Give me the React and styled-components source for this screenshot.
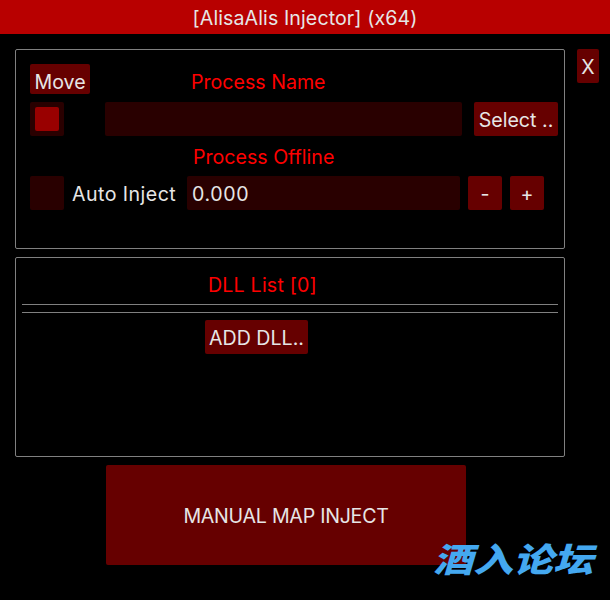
import React from "react";
import styled, { createGlobalStyle } from "styled-components";

const Global = createGlobalStyle`
  html, body {
    margin: 0;
    background: #000;
  }
  body {
    font-family: Inter, "Noto Sans", sans-serif;
    font-size: 19.6px;
    color: #e6e6e6;
  }
`;

const App = () => (
  <Page>
    <Global />
    <TitleBar>[AlisaAlis Injector] (x64)</TitleBar>
    <Body>
      <Column>
        <Panel $height={200}>
          <TopRow>
            <MoveButton>Move</MoveButton>
            <Label $left={101}>Process Name</Label>
          </TopRow>
          <Row>
            <CheckBox $checked />
            <Field $left={41} $width={357} />
            <Button $left={12} $width={84}>Select ..</Button>
          </Row>
          <LabelRow>
            <Label $left={163}>Process Offline</Label>
          </LabelRow>
          <Row>
            <CheckBox />
            <CheckLabel>Auto Inject</CheckLabel>
            <Field $left={11} $width={273}>0.000</Field>
            <Button $left={8} $width={34}>-</Button>
            <Button $left={8} $width={34}>+</Button>
          </Row>
        </Panel>
        <Panel $height={200}>
          <ListTitle>DLL List [0]</ListTitle>
          <Rule />
          <Rule />
          <AddButton>ADD DLL..</AddButton>
        </Panel>
      </Column>
      <CloseButton>X</CloseButton>
    </Body>
    <InjectButton>MANUAL MAP INJECT</InjectButton>
    <Watermark>酒入论坛</Watermark>
  </Page>
);

export default App;

const Page = styled.div`
  position: relative;
  width: 610px;
  height: 600px;
  overflow: hidden;
  background: #000;
`;

const TitleBar = styled.div`
  height: 34px;
  background: #b80000;
  display: flex;
  align-items: center;
  justify-content: center;
  color: #e6e6e6;
  padding-top: 2px;
  box-sizing: border-box;
  letter-spacing: 0.1px;
`;

const Body = styled.div`
  display: flex;
  align-items: flex-start;
  gap: 12px;
  padding: 15px 0 0 15px;
`;

const Column = styled.div`
  display: flex;
  flex-direction: column;
  gap: 8px;
  width: 550px;
`;

const Panel = styled.div`
  box-sizing: border-box;
  height: ${(p) => p.$height}px;
  border: 1px solid #808080;
  border-radius: 2px;
`;

const TopRow = styled.div`
  display: flex;
  align-items: center;
  height: 30px;
  margin: 14px 0 8px 14px;
`;

const Row = styled.div`
  display: flex;
  align-items: center;
  height: 34px;
  margin-left: 14px;
`;

const LabelRow = styled.div`
  display: flex;
  align-items: center;
  height: 40px;
  margin-left: 14px;
  padding-top: 2px;
  box-sizing: border-box;
`;

const Label = styled.span`
  color: #f00;
  margin-left: ${(p) => p.$left}px;
  white-space: nowrap;
`;

const Control = styled.div`
  box-sizing: border-box;
  flex: none;
  display: flex;
  align-items: center;
  border-radius: 2px;
  padding-top: 2px;
  white-space: nowrap;
`;

const MoveButton = styled(Control)`
  width: 60px;
  height: 30px;
  justify-content: center;
  background: #660000;
  padding-top: 6px;

  & + span {
    padding-top: 6px;
  }
`;

const CheckBox = styled(Control)`
  width: 34px;
  height: 34px;
  padding-top: 0;
  justify-content: center;
  background: #290000;

  &::after {
    content: "";
    display: ${(p) => (p.$checked ? "block" : "none")};
    width: 24px;
    height: 24px;
    border-radius: 2px;
    background: #990000;
  }
`;

const CheckLabel = styled.span`
  box-sizing: border-box;
  width: 104px;
  margin-left: 8px;
  padding-top: 2px;
  letter-spacing: 0.45px;
  white-space: nowrap;
`;

const Field = styled(Control)`
  width: ${(p) => p.$width}px;
  height: 34px;
  margin-left: ${(p) => p.$left}px;
  padding-left: 5px;
  letter-spacing: 0.6px;
  background: #290000;
`;

const Button = styled(Control)`
  width: ${(p) => p.$width}px;
  height: 34px;
  margin-left: ${(p) => p.$left}px;
  justify-content: center;
  background: #660000;
`;

const ListTitle = styled.div`
  height: 46px;
  display: flex;
  align-items: center;
  padding-left: 192px;
  padding-top: 8px;
  box-sizing: border-box;
  letter-spacing: 0.2px;
  color: #f00;
`;

const Rule = styled.div`
  height: 1px;
  margin: 0 6px 7px;
  background: #808080;
`;

const AddButton = styled(Control)`
  width: 103px;
  height: 34px;
  margin-left: 189px;
  justify-content: center;
  background: #660000;
`;

const CloseButton = styled(Control)`
  width: 22px;
  height: 34px;
  justify-content: center;
  background: #660000;
`;

const InjectButton = styled(Control)`
  width: 360px;
  height: 100px;
  margin: 8px 0 0 106px;
  justify-content: center;
  letter-spacing: -0.25px;
  background: #660000;
`;

const Watermark = styled.div`
  position: absolute;
  left: 433px;
  top: 536px;
  font-family: "Noto Sans CJK SC", sans-serif;
  font-size: 40px;
  line-height: 44px;
  font-weight: 900;
  font-style: italic;
  color: #44a8f0;
  white-space: nowrap;
  transform: scale(1, 0.84);
`;
